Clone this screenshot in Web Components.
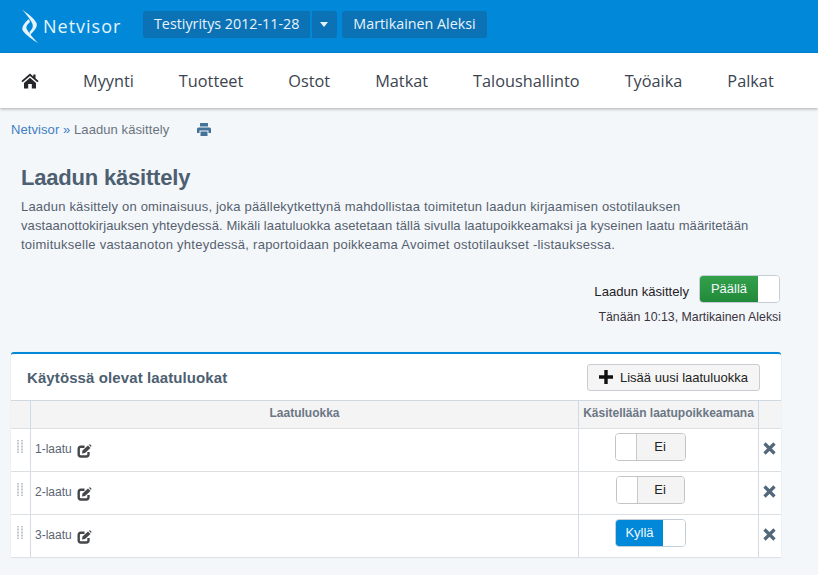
<!DOCTYPE html>
<html lang="fi"><head><meta charset="utf-8"><title>Laadun käsittely</title>
<style>
html,body{margin:0;height:575px;overflow:hidden;background:#f4f7fa;font-family:"Liberation Sans",Arial,sans-serif}
nv-page{display:block}
</style></head><body>
<nv-page></nv-page>
<script>
function def(name,html,init){customElements.define(name,class extends HTMLElement{
  constructor(){super();const r=this.attachShadow({mode:'open'});r.innerHTML=typeof html==='function'?html(this):html;}
  connectedCallback(){if(!this._d){this._d=1;const r=this.shadowRoot;if(typeof html==='function')r.innerHTML=html(this);}}
});}
def('nv-header',`<style>
:host{display:flex;height:53px;background:#0288d8;align-items:flex-start;box-sizing:border-box;font-family:"Open Sans",sans-serif;color:#e8f3fb;font-size:14.300px}
.logo{display:flex;align-items:center;width:143px;height:53px;box-sizing:border-box;padding-left:21px;flex:none}
.logo span{font-size:18px;letter-spacing:1px;color:#e6f4fc;margin-top:-1px;font-weight:400}
.bar{display:flex;margin-top:11px}
.b{height:27px;line-height:26px;background:#0b72b5;box-sizing:border-box;white-space:nowrap}
.co{width:167px;padding-left:11px;border-radius:3px 0 0 3px}
.ca{width:25px;margin-left:2px;border-radius:0 3px 3px 0;position:relative}
.ca:after{content:"";position:absolute;left:8px;top:11px;border:4px solid transparent;border-top:5px solid #e8f3fb;border-bottom:0}
.us{width:145px;margin-left:5px;text-align:center;border-radius:3px}
</style>
<div class="logo"><svg width="22" height="36" viewBox="0 0 22 36" style="flex:none;margin-top:-1px;overflow:visible"><g fill="#e6f4fc"><path d="M1 1.500C6 5 13 10 15.500 15C17 19 13 23 9 27L8.500 24C11 21.500 12.500 19 11.500 16C10 12 5 6 1 1.500Z"/><path d="M8 11L9 14C6 16.500 4.500 19 6 21.500C8 25 13 31 17.500 35.500C12 32 5 27 2 23C0 19.500 3 15 8 11Z"/></g></svg><span>Netvisor</span></div>
<div class="bar"><div class="b co">Testiyritys 2012-11-28</div><div class="b ca"></div><div class="b us">Martikainen Aleksi</div></div>`);
def('nv-nav',`<style>
:host{display:flex;height:55px;background:#fff;box-shadow:0 1px 3px rgba(0,0,0,.3);align-items:center;overflow:hidden;font-family:"Open Sans",sans-serif;font-size:16.300px;color:#3b4450;position:relative;white-space:nowrap}
svg{margin-left:21px;margin-right:44px;flex:none}
a{margin-right:45px;flex:none}
</style>
<svg width="18" height="16" viewBox="0 0 18 16"><path fill="#25272b" d="M9 .6L.4 8l1.200 1.300L9 3l7.400 6.300L17.600 8 14.500 5.300V1.500H12.300V3.400ZM3 10v5.400H7.200V11h3.600v4.400H15V10L9 4.800Z"/></svg>
<a>Myynti</a><a>Tuotteet</a><a>Ostot</a><a>Matkat</a><a>Taloushallinto</a><a>Työaika</a><a>Palkat</a><a>T</a>`);
def('nv-crumb',`<style>
:host{display:flex;align-items:center;height:42px;padding-left:11px;font-size:13px;letter-spacing:.08px;color:#69747f}
a{color:#3f7fc4}
svg{margin-left:28px;margin-top:1px}
</style><span><a>Netvisor</a> <a>»</a> Laadun käsittely</span>
<svg width="14" height="13" viewBox="0 0 14 13"><path fill="#44739a" d="M3.500 0H10.500Q11 0 11 .5V3.500H3V.5Q3 0 3.500 0ZM1.500 4.500H12.500Q14 4.500 14 6V10H11.500V7.500H2.500V10H0V6Q0 4.500 1.500 4.500ZM3.500 8.500H10.500V13H3.500Z"/></svg>`);
def('nv-intro',`<style>
:host{display:block;padding:0 0 0 21px;color:#56616f;font-size:13px;line-height:19px}
h1{margin:0;font-size:22px;letter-spacing:-.2px;line-height:28px;color:#4d5f70;font-weight:700;padding-top:14px;margin-bottom:5px}
p{margin:0;width:760px}
span{display:block;white-space:nowrap}
</style><h1>Laadun käsittely</h1><p><span style="letter-spacing:.2px">Laadun käsittely on ominaisuus, joka päällekytkettynä mahdollistaa toimitetun laadun kirjaamisen ostotilauksen</span><span style="letter-spacing:.09px">vastaanottokirjauksen yhteydessä. Mikäli laatuluokka asetetaan tällä sivulla laatupoikkeamaksi ja kyseinen laatu määritetään</span><span style="letter-spacing:.25px">toimitukselle vastaanoton yhteydessä, raportoidaan poikkeama Avoimet ostotilaukset -listauksessa.</span></p>`);
def('nv-switch',(h)=>{
 const on=h.hasAttribute('on');const w=h.getAttribute('w')||71;const k=h.getAttribute('k')||22;const bg=h.getAttribute('bg')||'#0288d8';
 return `<style>
:host{display:inline-flex;box-sizing:border-box;width:${w}px;height:28px;border:1px solid ${on?'#c5ced6':'#c4c4c4'};border-radius:4px;overflow:hidden;font-size:13px;background:#fff;flex:none}
.t{flex:1;text-align:center;line-height:26px;${on?`color:#f3f8fc;background:${bg}`:'color:#222;background:#f4f4f4;padding-right:2px'}}
.k{width:${k}px;flex:none;background:#fff;box-sizing:border-box;${on?'':'border-right:1px solid #c8c8c8'}}
</style>${on?'<div class="t"><slot></slot></div><div class="k"></div>':'<div class="k"></div><div class="t"><slot></slot></div>'}`});
def('nv-state',`<style>
:host{display:flex;flex-direction:column;align-items:flex-end;padding-right:37px;margin-top:21px;font-size:12px;color:#2c2f36}
.r{display:flex;align-items:center;margin-right:1px}
.l{margin-right:10px;margin-top:4px;font-size:13.100px;color:#1f2226}
.s{margin-top:7px;font-size:12.350px;line-height:14px;color:#3a3440}
</style><div class="r"><span class="l">Laadun käsittely</span><nv-switch on w="81" k="21" bg="linear-gradient(#33a04a,#228a3b)">Päällä</nv-switch></div><div class="s">Tänään 10:13, Martikainen Aleksi</div>`);
def('nv-row',(h)=>{
 const n=h.getAttribute('name');const sw=h.getAttribute('sw');
 return `<style>
:host{display:grid;grid-template-columns:19px 548px 180px 1fr;height:43px;box-sizing:border-box;border-top:1px solid #dde0e3;background:#fff;font-size:12px;color:#5a6471}
div{box-sizing:border-box}
.g{padding:11px 0 0 6px}
.n{border-left:1px solid #d4dce4;display:flex;align-items:center;padding-left:4px;padding-bottom:3px}
.n svg{margin-left:5px;margin-top:5px}
.c{border-left:1px solid #d4dce4;display:flex;justify-content:center;padding:4px 36px 0 0}
.x{border-left:1px solid #d4dce4;display:flex;justify-content:center;padding:13px 2px 0 0}
</style><div class="g"><svg width="7" height="13" viewBox="0 0 7 13"><g fill="none" stroke="#b4b7ba" stroke-width="1.500" stroke-dasharray="1 .5"><path d="M1 0V13M5 0V13"/></g></svg></div>
<div class="n"><span>${n}</span><svg width="15" height="14" viewBox="0 0 15 14"><path fill="none" stroke="#45474a" stroke-width="2.400" d="M7.500 2.800H3.800Q1.700 2.800 1.700 5V10.300Q1.700 12.500 3.800 12.500H9.300Q11.500 12.500 11.500 10.300V8"/><path fill="#45474a" d="M5 9.500L5.500 6.500 11 1.500 13.500 4 8 9Z"/><path fill="#45474a" d="M11.800 .8L13 .2 14.500 1.800 14 3Z"/></svg></div>
<div class="c"><nv-switch ${sw==='on'?'on':''} w="${h.getAttribute('w')||71}" k="${sw==='on'?22:21}">${sw==='on'?'Kyllä':'Ei'}</nv-switch></div>
<div class="x"><svg width="13" height="13" viewBox="0 0 13 13"><path stroke="#54687c" stroke-width="3.200" d="M1.500 1.500L11.500 11.500M11.500 1.500L1.500 11.500"/></svg></div>`});
def('nv-card',`<style>
:host{display:block;margin:0 37px 0 11px;background:#fff;border-top:2px solid #0288d8;border-radius:3px 3px 0 0;box-shadow:0 0 1px #c3ccd5,0 1px 1px #dfe4e9;font-family:"Liberation Sans",sans-serif}
.h{display:flex;align-items:center;justify-content:space-between;height:46px;padding:0 21px 0 16px;box-sizing:border-box}
h2{margin:0;font-size:15px;letter-spacing:.1px;font-weight:700;color:#4d5f70}
button{font:13px "Liberation Sans",sans-serif;color:#222;display:flex;align-items:center;width:173px;height:27px;border:1px solid #c9cdd1;border-radius:3px;background:#f5f5f5;padding:0 0 0 11px}
button svg{margin-right:7px}
.th{display:grid;grid-template-columns:19px 548px 180px 1fr;height:28px;border-top:1px solid #cfd8e0;background:#f4f4f4;font-size:12px;font-weight:700;color:#6b7785;box-sizing:border-box}
.th div{border-left:1px solid #cddbe7;text-align:center;line-height:25px}
.th div:first-child{border:0}
</style><div class="h"><h2>Käytössä olevat laatuluokat</h2><button><svg width="14" height="14" viewBox="0 0 14 14"><path stroke="#111" stroke-width="3.400" d="M7 0V14M0 7H14"/></svg>Lisää uusi laatuluokka</button></div>
<div class="th"><div></div><div>Laatuluokka</div><div>Käsitellään laatupoikkeamana</div><div></div></div>
<nv-row name="1-laatu" sw="off"></nv-row><nv-row name="2-laatu" sw="off" w="69"></nv-row><nv-row name="3-laatu" sw="on"></nv-row>`);
def('nv-page',`<style>:host{display:block}nv-card{margin-top:28px}</style><nv-header></nv-header><nv-nav></nv-nav><nv-crumb></nv-crumb><nv-intro></nv-intro><nv-state></nv-state><nv-card></nv-card>`);
</script></body></html>
